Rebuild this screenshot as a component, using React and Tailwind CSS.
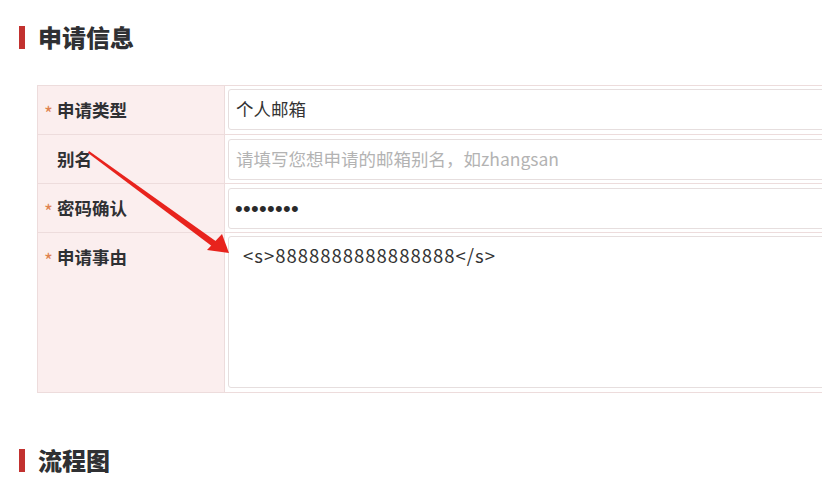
import React from "react";

const font = { fontFamily: '"Noto Sans CJK SC", "Noto Sans", sans-serif' };

function SectionTitle({ children }) {
    return (
        <div className="flex items-center h-[24px]">
            <div className="w-[6px] h-[23px] bg-[#c2312f]" />
            <h2 className="ml-[13px] text-[24px] leading-[24px] font-black text-[#2f3033]">{children}</h2>
        </div>
    );
}

function Row({ label, required, tall, children, last }) {
    return (
        <div className={`flex ${last ? "" : "border-b border-[#eddcdc]"} ${tall ? "h-[159px]" : "h-[49px]"}`}>
            <div className="w-[187px] shrink-0 bg-[#fbeeee] border-r border-[#eddcdc] pl-[6px]">
                <div className="h-[48px] flex items-center">
                    <span className="w-[13px] text-[#e0834f] text-[19px] leading-none pt-[4px]">{required ? "*" : ""}</span>
                    <span className="text-[17.5px] font-bold text-[#2f3033]">{label}</span>
                </div>
            </div>
            <div className="flex-1 p-[3px]">{children}</div>
        </div>
    );
}

export default function App() {
    return (
        <div className="relative w-[822px] h-[481px] overflow-hidden bg-white" style={font}>
            <div className="pt-[25px] pl-[19px]">
                <SectionTitle>申请信息</SectionTitle>
            </div>

            <div className="mt-[36px] ml-[37px] w-[900px] border border-[#eddcdc]">
                <Row label="申请类型" required>
                    <div className="h-[41px] border border-[#e6dede] rounded-[3px] flex items-center pl-[7px] text-[17.5px] text-[#333]">
                        个人邮箱
                    </div>
                </Row>
                <Row label="别名">
                    <div className="h-[41px] mt-[1px] border border-[#e6dede] rounded-[3px] flex items-center pl-[7px] text-[17.5px] text-[#b3b3b3]">
                        请填写您想申请的邮箱别名，如zhangsan
                    </div>
                </Row>
                <Row label="密码确认" required>
                    <div
                        className="h-[41px] mt-[1px] border border-[#e6dede] rounded-[3px] flex items-center pl-[6px] text-[22px] tracking-[0.3px] text-[#2a2a2a]"
                        style={{ fontFamily: '"Liberation Sans", sans-serif' }}
                    >
                        ••••••••
                    </div>
                </Row>
                <Row label="申请事由" required tall last>
                    <div className="h-[152px] border border-[#e6dede] rounded-[3px] pl-[14px] pt-[6px] text-[18.5px] leading-[24px] tracking-[1px] text-[#333]">
                        {"<s>8888888888888888</s>"}
                    </div>
                </Row>
            </div>

            <div className="mt-[55px] pl-[19px]">
                <SectionTitle>流程图</SectionTitle>
            </div>

            {/* red annotation arrow */}
            <svg className="absolute left-0 top-0 pointer-events-none" width="822" height="481">
                <polygon points="89,151 217,242 213,247 88,153" fill="#e8231d" />
                <polygon points="229,253 207,250 222,234" fill="#e8231d" />
            </svg>
        </div>
    );
}
